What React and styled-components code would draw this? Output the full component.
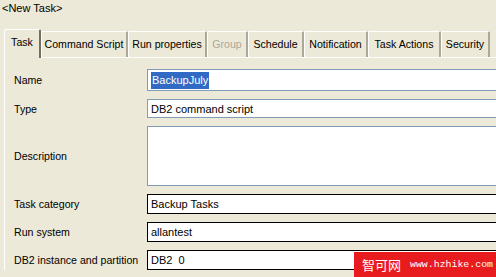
import React from 'react';
import styled, { createGlobalStyle } from 'styled-components';

const GlobalStyle = createGlobalStyle`
  html, body {
    margin: 0;
    padding: 0;
    background: #ece9d8;
    overflow: hidden;
  }
  body {
    width: 496px;
    height: 277px;
    font-family: "Liberation Sans", Arial, sans-serif;
    font-size: 11px;
    color: #000;
  }
`;

const Window = styled.div`
  position: relative;
  width: 496px;
  height: 277px;
  overflow: hidden;
  background: #ece9d8;
`;

const Title = styled.div`
  height: 17px;
  line-height: 16px;
  padding-left: 2px;
  font-size: 11px;
`;

const TabStrip = styled.div`
  display: flex;
  align-items: flex-end;
  height: 28px;
  margin-top: 12px;
  padding-left: 4px;
  position: relative;
  z-index: 1;
`;

const Tab = styled.div`
  box-sizing: border-box;
  width: ${p => p.$w}px;
  height: ${p => (p.$active ? 29 : 26)}px;
  margin-bottom: ${p => (p.$active ? -1 : 0)}px;
  border-top: 1px solid #fff;
  border-left: 1px solid #fff;
  border-right: 2px solid ${p => (p.$active ? '#716f64' : '#aca899')};
  border-top-left-radius: 2px;
  border-top-right-radius: 2px;
  background: #ece9d8;
  display: flex;
  align-items: center;
  justify-content: center;
  padding-bottom: ${p => (p.$active ? 4 : 1)}px;
  font-size: 10.6px;
  color: ${p => (p.$disabled ? '#aca899' : '#000')};
  white-space: nowrap;
`;

const Panel = styled.div`
  margin-left: 4px;
  border-top: 1px solid #fff;
  border-left: 1px solid #fff;
  padding: 11px 0 0 9px;
`;

const Form = styled.div`
  display: grid;
  grid-template-columns: 133px 360px;
  row-gap: 8px;
  align-items: center;
`;

const Label = styled.div`
  font-size: 10.6px;
  white-space: nowrap;
`;

const Field = styled.div`
  box-sizing: border-box;
  height: ${p => p.$h}px;
  background: #fff;
  border: 1px solid ${p => (p.$dark ? '#000' : '#7f9db9')};
  display: flex;
  align-items: center;
  padding-left: 3px;
  font-size: 11px;
  white-space: nowrap;
`;

const Selected = styled.span`
  background: #316ac5;
  color: #fff;
  padding: 1px 1px;
  line-height: 15px;
`;

const Watermark = styled.div`
  position: absolute;
  right: 0;
  bottom: 0;
  width: 142px;
  height: 25px;
  background: #e81c1e;
  color: #fff;
  display: flex;
  align-items: center;
  gap: 9px;
  padding-left: 8px;
  box-sizing: border-box;
  white-space: nowrap;
`;

const WmChinese = styled.span`
  font-family: "Noto Sans CJK SC", sans-serif;
  font-size: 13px;
  flex-shrink: 0;
`;

const WmUrl = styled.span`
  font-family: "Liberation Mono", monospace;
  font-size: 9.9px;
  flex-shrink: 0;
`;

const tabs = [
  { label: 'Task', w: 37, active: true },
  { label: 'Command Script', w: 87 },
  { label: 'Run properties', w: 79 },
  { label: 'Group', w: 41, disabled: true },
  { label: 'Schedule', w: 56 },
  { label: 'Notification', w: 64 },
  { label: 'Task Actions', w: 73 },
  { label: 'Security', w: 49 },
];

export default function App() {
  return (
    <Window>
      <GlobalStyle />
      <Title>&lt;New Task&gt;</Title>
      <TabStrip>
        {tabs.map(t => (
          <Tab key={t.label} $w={t.w} $active={t.active} $disabled={t.disabled}>
            {t.label}
          </Tab>
        ))}
      </TabStrip>
      <Panel>
        <Form>
          <Label>Name</Label>
          <Field $h={22}><Selected>BackupJuly</Selected></Field>
          <Label>Type</Label>
          <Field $h={19}>DB2 command script</Field>
          <Label>Description</Label>
          <Field $h={60} />
          <Label>Task category</Label>
          <Field $h={20} $dark>Backup Tasks</Field>
          <Label>Run system</Label>
          <Field $h={20} $dark>allantest</Field>
          <Label>DB2 instance and partition</Label>
          <Field $h={20} $dark>DB2&nbsp;&nbsp;0</Field>
        </Form>
      </Panel>
      <Watermark>
        <WmChinese>智可网</WmChinese>
        <WmUrl>www.hzhike.com</WmUrl>
      </Watermark>
    </Window>
  );
}
